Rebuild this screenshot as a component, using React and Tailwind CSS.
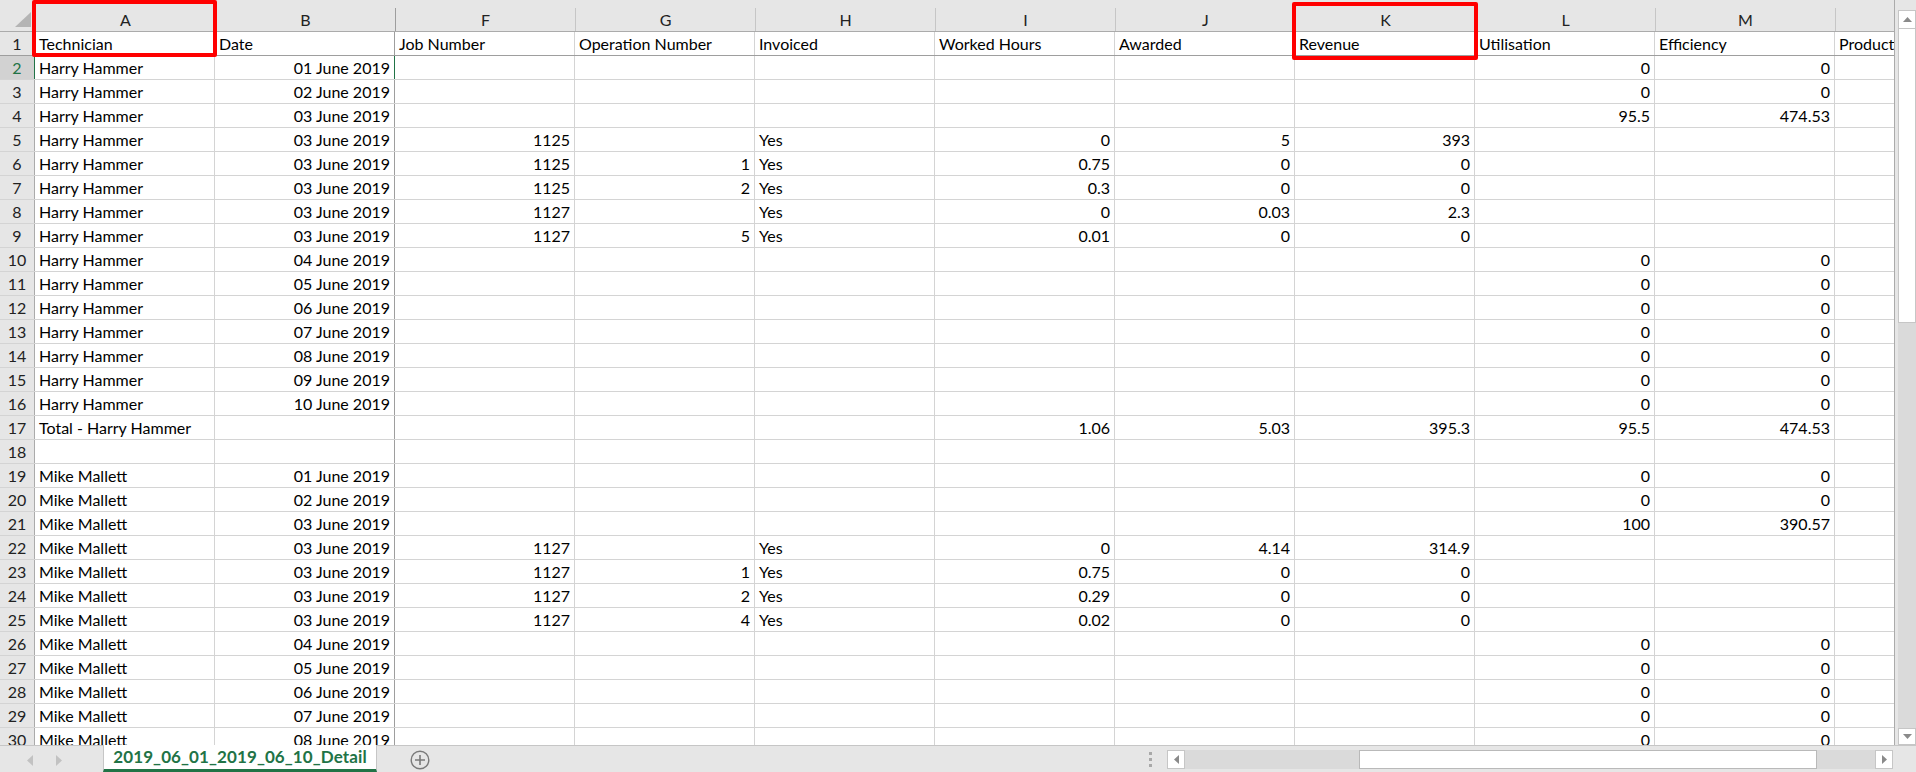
import React from "react";

const COLS = ["A", "B", "F", "G", "H", "I", "J", "K", "L", "M", ""];
const ALIGN = ["l", "r", "r", "r", "l", "r", "r", "r", "r", "r", "l"];

const HEAD = ["Technician", "Date", "Job Number", "Operation Number", "Invoiced", "Worked Hours", "Awarded", "Revenue", "Utilisation", "Efficiency", "Productivity"];

const hh = "Harry Hammer";
const mm = "Mike Mallett";
const e = "";
const day = (d) => `${d} June 2019`;

const DATA = [
  [hh, day("01"), e, e, e, e, e, e, "0", "0", e],
  [hh, day("02"), e, e, e, e, e, e, "0", "0", e],
  [hh, day("03"), e, e, e, e, e, e, "95.5", "474.53", e],
  [hh, day("03"), "1125", e, "Yes", "0", "5", "393", e, e, e],
  [hh, day("03"), "1125", "1", "Yes", "0.75", "0", "0", e, e, e],
  [hh, day("03"), "1125", "2", "Yes", "0.3", "0", "0", e, e, e],
  [hh, day("03"), "1127", e, "Yes", "0", "0.03", "2.3", e, e, e],
  [hh, day("03"), "1127", "5", "Yes", "0.01", "0", "0", e, e, e],
  [hh, day("04"), e, e, e, e, e, e, "0", "0", e],
  [hh, day("05"), e, e, e, e, e, e, "0", "0", e],
  [hh, day("06"), e, e, e, e, e, e, "0", "0", e],
  [hh, day("07"), e, e, e, e, e, e, "0", "0", e],
  [hh, day("08"), e, e, e, e, e, e, "0", "0", e],
  [hh, day("09"), e, e, e, e, e, e, "0", "0", e],
  [hh, day("10"), e, e, e, e, e, e, "0", "0", e],
  ["Total - Harry Hammer", e, e, e, e, "1.06", "5.03", "395.3", "95.5", "474.53", e],
  [e, e, e, e, e, e, e, e, e, e, e],
  [mm, day("01"), e, e, e, e, e, e, "0", "0", e],
  [mm, day("02"), e, e, e, e, e, e, "0", "0", e],
  [mm, day("03"), e, e, e, e, e, e, "100", "390.57", e],
  [mm, day("03"), "1127", e, "Yes", "0", "4.14", "314.9", e, e, e],
  [mm, day("03"), "1127", "1", "Yes", "0.75", "0", "0", e, e, e],
  [mm, day("03"), "1127", "2", "Yes", "0.29", "0", "0", e, e, e],
  [mm, day("03"), "1127", "4", "Yes", "0.02", "0", "0", e, e, e],
  [mm, day("04"), e, e, e, e, e, e, "0", "0", e],
  [mm, day("05"), e, e, e, e, e, e, "0", "0", e],
  [mm, day("06"), e, e, e, e, e, e, "0", "0", e],
  [mm, day("07"), e, e, e, e, e, e, "0", "0", e],
  [mm, day("08"), e, e, e, e, e, e, "0", "0", e],
];

function Cell({ value, align, idx, green }) {
  const freeze = idx === 1;
  return (
    <div
      className={`w-[180px] shrink-0 h-full border-r px-[4px] leading-[23px] whitespace-nowrap overflow-hidden ${
        align === "r" ? "text-right" : "text-left"
      } ${green ? "border-[#217346]" : freeze ? "border-[#9e9e9e]" : "border-[#d4d4d4]"}`}
    >
      {value}
    </div>
  );
}

function Row({ n, values, headerRow }) {
  const selected = n === 2;
  return (
    <div
      className={`flex h-[24px] border-b ${headerRow ? "border-[#9e9e9e]" : "border-[#d4d4d4]"}`}
    >
      <div
        className={`w-[35px] shrink-0 h-full border-r text-center leading-[23px] ${
          selected
            ? "bg-[#d2d2d2] text-[#217346] border-[#217346]"
            : "bg-[#e6e6e6] text-[#222] border-[#ababab]"
        }`}
      >
        {n}
      </div>
      {values.map((v, i) => (
        <Cell key={i} value={v} align={headerRow ? "l" : ALIGN[i]} idx={i} green={selected && i === 1} />
      ))}
    </div>
  );
}

function ColumnHeader() {
  return (
    <div className="flex h-[32px] bg-[#e6e6e6] border-b border-[#ababab]">
      <div className="w-[35px] shrink-0 h-full relative">
        <svg className="absolute left-0 top-0" width="35" height="31" viewBox="0 0 35 31">
          <polygon points="15,27 31,27 31,12" fill="#b4b4b4" />
        </svg>
      </div>
      {COLS.map((c, i) => (
        <div key={i} className="w-[180px] shrink-0 h-full flex items-end">
          <div
            className={`w-full h-[23px] border-l text-center leading-[23px] text-[#222] ${
              i === 2 ? "border-[#9e9e9e]" : "border-[#c6c6c6]"
            }`}
          >
            {c}
          </div>
        </div>
      ))}
    </div>
  );
}

function VScroll() {
  return (
    <div className="w-[22px] shrink-0 h-full bg-[#e6e6e6] border-l border-[#ababab] pl-[3px] pt-[10px] flex flex-col">
      <div className="flex-1 bg-[#dadada] flex flex-col">
        <div className="h-[19px] bg-white border border-[#c6c6c6] flex items-center justify-center">
          <svg width="9" height="5" viewBox="0 0 9 5">
            <polygon points="0,5 9,5 4.5,0" fill="#8a8a8a" />
          </svg>
        </div>
        <div className="h-[294px] bg-white border border-[#c6c6c6] border-t-0" />
        <div className="flex-1" />
        <div className="h-[17px] bg-white border border-[#c6c6c6] flex items-center justify-center">
          <svg width="9" height="5" viewBox="0 0 9 5">
            <polygon points="0,0 9,0 4.5,5" fill="#8a8a8a" />
          </svg>
        </div>
      </div>
    </div>
  );
}

function TabBar() {
  return (
    <div className="h-[27px] flex border-t border-[#c6c6c6] bg-[#e6e6e6]">
      <div className="w-[103px] shrink-0 flex items-center pl-[27px] gap-[23px] pt-[2px]">
        <svg width="6" height="11" viewBox="0 0 6 11">
          <polygon points="6,0 6,11 0,5.5" fill="#c2c2c2" />
        </svg>
        <svg width="6" height="11" viewBox="0 0 6 11">
          <polygon points="0,0 0,11 6,5.5" fill="#c2c2c2" />
        </svg>
      </div>
      <div className="-mt-px w-[274px] shrink-0 h-[27px] bg-white border-x border-[#c6c6c6] border-b-[3px] border-b-[#217346] flex items-center justify-center font-bold text-[17px] text-[#217346] tracking-[0.1px]">
        2019_06_01_2019_06_10_Detail
      </div>
      <div className="w-[53px] shrink-0 flex items-center justify-end pt-[2px]">
        <svg width="20" height="20" viewBox="0 0 20 20">
          <circle cx="10" cy="10" r="8.8" fill="none" stroke="#7a7a7a" strokeWidth="1.4" />
          <path d="M10 5 V15 M5 10 H15" stroke="#7a7a7a" strokeWidth="1.6" />
        </svg>
      </div>
      <div className="flex-1 flex items-center justify-end pr-[15px]">
        <div className="flex flex-col gap-[3px]">
          <div className="w-[3px] h-[3px] bg-[#a8a8a8]" />
          <div className="w-[3px] h-[3px] bg-[#a8a8a8]" />
          <div className="w-[3px] h-[3px] bg-[#a8a8a8]" />
        </div>
      </div>
      <div className="w-[726px] shrink-0 flex items-center pt-[1px]">
        <div className="w-full h-[19px] bg-[#dadada] flex">
          <div className="w-[18px] h-full bg-white border border-[#c6c6c6] flex items-center justify-center">
            <svg width="5" height="9" viewBox="0 0 5 9">
              <polygon points="5,0 5,9 0,4.5" fill="#8a8a8a" />
            </svg>
          </div>
          <div className="w-[174px]" />
          <div className="w-[458px] h-full bg-white border border-[#b9b9b9]" />
          <div className="flex-1" />
          <div className="w-[18px] h-full bg-white border border-[#c6c6c6] flex items-center justify-center">
            <svg width="5" height="9" viewBox="0 0 5 9">
              <polygon points="0,0 0,9 5,4.5" fill="#8a8a8a" />
            </svg>
          </div>
        </div>
      </div>
      <div className="w-[23px] shrink-0" />
    </div>
  );
}

export default function App() {
  return (
    <div
      className="w-[1916px] h-[772px] flex flex-col bg-[#e6e6e6] overflow-hidden text-[16px] text-black"
      style={{ fontFamily: "Lato, 'Open Sans', sans-serif" }}
    >
      <div className="flex h-[745px] shrink-0">
        <div className="relative w-[1894px] h-full overflow-hidden bg-white">
          <ColumnHeader />
          <Row n={1} values={HEAD} headerRow />
          {DATA.map((r, i) => (
            <Row key={i} n={i + 2} values={r} />
          ))}
          <div className="absolute left-[32px] top-0 w-[185px] h-[57px] border-4 border-[#ff0000] rounded-[2px]" />
          <div className="absolute left-[1292px] top-[2px] w-[186px] h-[58px] border-4 border-[#ff0000] rounded-[2px]" />
        </div>
        <VScroll />
      </div>
      <TabBar />
    </div>
  );
}
